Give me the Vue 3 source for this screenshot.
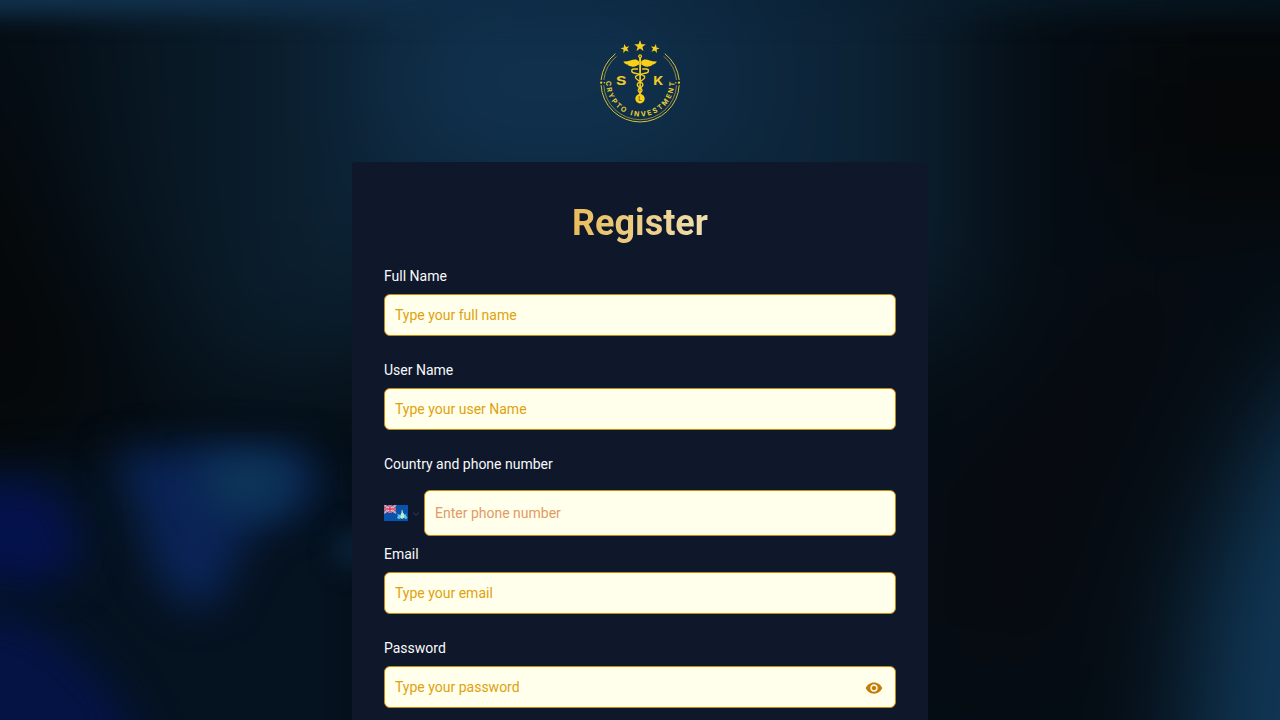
<script setup>
const before = [
  { label: 'Full Name', hint: 'Type your full name', type: 'text' },
  { label: 'User Name', hint: 'Type your user Name', type: 'text' },
]
const after = [
  { label: 'Email', hint: 'Type your email', type: 'email' },
  { label: 'Password', hint: 'Type your password', type: 'password' },
]
const star = 'M0-6 1.5-2 5.7-1.9 2.4.7 3.5 4.8 0 2.4-3.5 4.8-2.4.7-5.7-1.9-1.5-2Z'
</script>

<template>
  <div class="page">
    <svg class="backdrop" viewBox="0 0 1280 720" preserveAspectRatio="none" aria-hidden="true">
      <defs>
        <filter id="b10" x="-100%" y="-100%" width="300%" height="300%" color-interpolation-filters="sRGB"><feGaussianBlur stdDeviation="12" /></filter>
        <filter id="b20" x="-50%" y="-50%" width="200%" height="200%" color-interpolation-filters="sRGB"><feGaussianBlur stdDeviation="20" /></filter>
        <filter id="b50" x="-100%" y="-100%" width="300%" height="300%" color-interpolation-filters="sRGB"><feGaussianBlur stdDeviation="52" /></filter>
        <linearGradient id="topband"><stop offset="0" stop-color="#123350" /><stop offset=".5" stop-color="#0e2b45" /><stop offset=".8" stop-color="#071722" /><stop offset="1" stop-color="#06131c" /></linearGradient>
      </defs>
      <rect width="1280" height="720" fill="#040c12" />
      <g filter="url(#b50)">
        <rect x="-200" y="-200" width="1700" height="1120" fill="#050d14" />
        <path d="M70-150H400V400H200L110 200Z" fill="#081824" />
        <rect x="240" y="-150" width="730" height="480" fill="#0b1f2f" />
        <rect x="350" y="-100" width="500" height="330" fill="#0d263c" />
        <ellipse cx="550" cy="80" rx="170" ry="110" fill="#10304c" />
        <path d="M-200 110H-20L40 240 110 400 60 440H-200Z" fill="#050708" />
        <rect x="1120" y="20" width="350" height="190" fill="#050708" />
        <path d="M1110 250 1070 340 950 480 940 650 1040 680 1100 500 1200 300Z" fill="#070a10" />
        <path d="M1480 220 1270 430 1200 600 1180 920H1500Z" fill="#103655" />
      </g>
      <rect x="-60" y="-50" width="1400" height="65" fill="url(#topband)" filter="url(#b10)" />
      <path d="M-60 480C70 460 180 450 360 460V800H-60Z" fill="#051220" filter="url(#b20)" />
      <path d="M112 456Q205 440 305 452 335 495 275 520 242 530 226 588 210 618 176 600 145 565 141 515Z" fill="#0a2456" filter="url(#b20)" />
      <path d="M200 458H285Q310 486 275 510L215 508Z" fill="#0e3858" filter="url(#b20)" />
      <path d="M-60 482H40Q88 515 78 570L20 590-60 560Z" fill="#04124c" filter="url(#b20)" />
      <path d="M-60 600 30 620Q110 660 150 760H-60Z" fill="#041344" filter="url(#b20)" />
      <ellipse cx="352" cy="549" rx="18" ry="20" fill="#0a233a" filter="url(#b10)" />
    </svg>

    <main class="content">
      <svg class="logo" viewBox="0 0 100 100" role="img" aria-label="SK Crypto Investment">
        <defs>
          <path id="motto" d="M16 49V52.3A34.2 34.2 0 0 0 84.4 52.3V47" />
        </defs>
        <g fill="#f7d01c">
          <path :d="star" transform="translate(50 16.2)" />
          <path :d="star" transform="translate(35.2 18.7) rotate(-12) scale(.78)" />
          <path :d="star" transform="translate(65 18.7) rotate(12) scale(.78)" />
          <circle cx="11.2" cy="52.7" r="1.15" /><circle cx="89" cy="52.7" r="1.15" />
          <circle cx="14.4" cy="52.7" r=".7" /><circle cx="85.8" cy="52.7" r=".7" />
        </g>
        <g fill="none" stroke="#d8c33b" stroke-width="1">
          <path d="M25.5 23.7A39.1 39.1 0 0 0 11.1 50M74.8 23.7A39.1 39.1 0 0 1 89.2 50" />
          <path d="M11.1 55.2A39.1 38.7 0 0 0 89.2 55.2" />
          <path d="M26.4 26.4A36.4 36.4 0 0 0 13.8 50M73.9 26.4A36.4 36.4 0 0 1 86.5 50M13.8 55.4A36.4 36.2 0 0 0 86.5 55.4" stroke-width=".6" />
        </g>
        <g fill="#f9cf18">
          <circle cx="50.1" cy="26.2" r="1.9" />
          <path d="M49.1 27H51.1L50.8 63H49.4Z" />
          <path d="M49 31.5C45 26.8 41.5 31.6 33.3 31.4 35 34.2 36.8 34.5 37.6 34.6 38.5 36.4 40.2 36.3 41.2 36.2 43.7 37.6 46.5 36.1 49 34.5Z" />
          <path d="M51.2 31.5C55.2 26.8 58.7 31.6 66.9 31.4 65.2 34.2 63.4 34.5 62.6 34.6 61.7 36.4 60 36.3 59 36.2 56.5 37.6 53.7 36.1 51.2 34.5Z" />
          <circle cx="50" cy="68.8" r="4.7" />
        </g>
        <circle cx="50.1" cy="26.2" r=".7" fill="#0f2d49" />
        <g fill="none" stroke="#f5cf22" stroke-width="1.35">
          <path d="M48 39H44C41 39 41 42.5 44 43 48 44 56 44.5 54.5 48 53 51 46.8 52 47.3 55 48 58 52.5 58 52 60.5 51.3 62.5 50 62.5 50 64" />
          <path d="M52.2 39H56.2C59.2 39 59.2 42.5 56.2 43 52.2 44 44.2 44.5 45.7 48 47.2 51 53.4 52 52.9 55 52.2 58 47.7 58 48.2 60.5 48.9 62.5 50 62.5 50 64" />
        </g>
        <text class="coin" x="50" y="71" text-anchor="middle">L</text>
        <text class="initial" x="25.9" y="55.2" textLength="10.4" lengthAdjust="spacingAndGlyphs">S</text>
        <text class="initial" x="63.2" y="55.2" textLength="10" lengthAdjust="spacingAndGlyphs">K</text>
        <text class="motto"><textPath href="#motto" startOffset="2" textLength="109" lengthAdjust="spacing">CRYPTO INVESTMENT</textPath></text>
      </svg>

      <form class="card" @submit.prevent>
        <h1>Register</h1>
        <label v-for="f in before" :key="f.label" class="field">
          <span>{{ f.label }}</span>
          <input :type="f.type" :placeholder="f.hint" />
        </label>
        <div class="field phone">
          <span>Country and phone number</span>
          <div class="phone-row">
            <svg class="flag" viewBox="0 0 24 16">
              <rect width="24" height="16" fill="#0754ae" />
              <rect width="12" height="8" fill="#39427d" />
              <path d="M0 0 12 8M12 0 0 8" stroke="#f4e9f0" stroke-width="1.7" />
              <path d="M0 0 12 8M12 0 0 8" stroke="#de3856" stroke-width=".7" />
              <path d="M6 0V8M0 4H12" stroke="#f8edf1" stroke-width="2.7" />
              <path d="M6 0V8M0 4H12" stroke="#df3450" stroke-width="1.5" />
              <path d="M12.8 8.5 14 10.2 13 13 15 14.2 17 13H20L22 14.2 23.5 12.8 22 10.6 22.7 8.3 20.8 10 18.3 6.5 16.2 10Z" fill="#60bde0" />
              <path d="M18.2 5.2 19 8 20.5 10 19.8 12.8 18 14 16.3 12.5 17 9.5Z" fill="#b1f2db" />
              <path d="M18 4.8V7M15.5 11.3 17 12.7M19.5 9.8 21.5 12" stroke="#efce61" stroke-width=".8" />
            </svg>
            <svg class="chevron" viewBox="0 0 8 6"><path d="M1.2 1.5 4 4.3 6.8 1.5" fill="none" stroke="#27313f" stroke-width="1.2" /></svg>
            <input type="tel" placeholder="Enter phone number" />
          </div>
        </div>
        <label v-for="f in after" :key="f.label" class="field">
          <span>{{ f.label }}</span>
          <div class="control">
            <input :type="f.type" :placeholder="f.hint" />
            <svg v-if="f.type === 'password'" class="eye" viewBox="0 0 24 24">
              <path fill="#c57d09" d="M12 4.5C7 4.5 2.73 7.61 1 12c1.73 4.39 6 7.5 11 7.5s9.27-3.11 11-7.5c-1.73-4.39-6-7.5-11-7.5zM12 17c-2.76 0-5-2.24-5-5s2.24-5 5-5 5 2.24 5 5-2.24 5-5 5zm0-8c-1.66 0-3 1.34-3 3s1.34 3 3 3 3-1.34 3-3-1.34-3-3-3z" />
            </svg>
          </div>
        </label>
      </form>
    </main>
  </div>
</template>

<style scoped>
.page {
  position: relative;
  height: 720px;
  overflow: hidden;
  background: #040c12;
  font-family: Roboto, "Liberation Sans", sans-serif;
  font-size: 14px;
}
.backdrop {
  position: absolute;
  inset: 0;
  width: 100%;
  height: 100%;
}
.content {
  position: relative;
  display: flex;
  flex-direction: column;
  align-items: center;
  padding-top: 30px;
}
.logo { width: 100px; height: 100px; margin-bottom: 32px; overflow: visible; }
.initial { font: 700 12px Inter, sans-serif; fill: #f1c928; }
.coin { font: 700 6px Inter, sans-serif; fill: #806c17; }
.motto { font: 700 7px Inter, sans-serif; fill: #e5ce36; }
.card {
  box-sizing: border-box;
  width: 576px;
  padding: 41px 32px 40px;
  border-radius: 4px;
  background: #0f172a;
}
h1 {
  width: max-content;
  margin: 0 auto 23px;
  font-size: 36px;
  line-height: 40px;
  font-weight: 700;
  color: transparent;
  background: linear-gradient(90deg, #e9bc5c, #f0dfae);
  background-clip: text;
}
.field { display: block; margin-bottom: 24px; color: #f8fafc; }
.field > span { display: block; line-height: 20px; margin-bottom: 8px; }
input {
  display: block;
  box-sizing: border-box;
  width: 100%;
  height: 42px;
  margin: 0;
  padding: 0 10px;
  border: 1px solid #ca8a04;
  border-radius: 6px;
  outline: none;
  background: #ffffeb;
  font: inherit;
  color: #ca8a04;
}
input::placeholder { color: #dfa10e; opacity: 1; }
.phone { margin-bottom: 8px; }
.phone > span { margin-bottom: 16px; }
.phone-row { display: flex; align-items: center; }
.phone-row input { flex: 1; width: auto; height: 46px; }
.phone-row input::placeholder { color: #e49a62; }
.flag { width: 24px; height: 16px; }
.chevron { width: 8px; height: 6px; margin: 2px 4px 0; }
.control { position: relative; }
.eye { position: absolute; right: 13px; top: 13px; width: 18px; height: 18px; }
</style>

<style>
body { background: #040c12; }
</style>
